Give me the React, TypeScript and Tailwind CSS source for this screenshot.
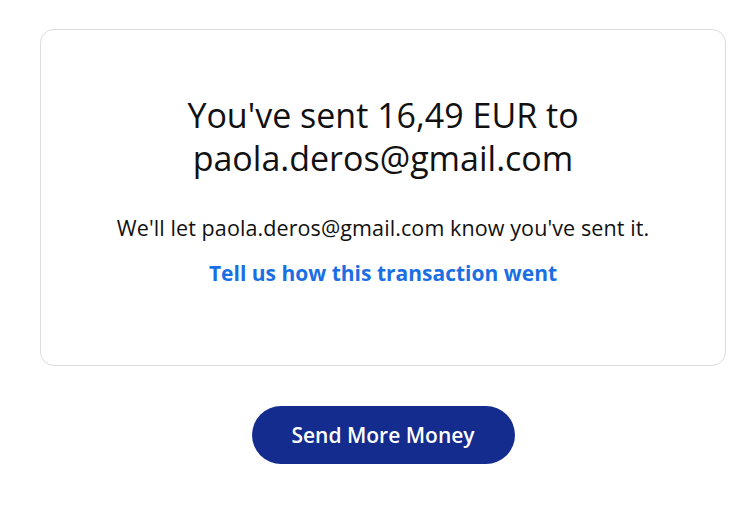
import React from 'react';

const App = () => {
  return (
    <div className="min-h-[511px] w-full bg-white pl-[40px] pr-[30px] pt-[29px] font-['Open_Sans',sans-serif] text-[#111111]">
      <div className="flex h-[337px] flex-col items-center rounded-[14px] border border-[#dcdcdc] px-6 pt-[64px] text-center">
        <h1 className="text-[34px] leading-[43px] font-normal">
          You've sent 16,49 EUR to
          <br />
          paola.deros@gmail.com
        </h1>
        <p className="mt-[34px] text-[21.5px] leading-[28px] tracking-[0.1px]">
          We'll let paola.deros@gmail.com know you've sent it.
        </p>
        <a href="#" className="mt-[17px] text-[21px] leading-[28px] font-bold text-[#1b6fe3]">
          Tell us how this transaction went
        </a>
      </div>
      <div className="mt-[40px] flex justify-center">
        <button className="h-[58px] w-[263px] rounded-full bg-[#142c8e] pt-[1px] text-[21px] font-semibold text-white">
          Send More Money
        </button>
      </div>
    </div>
  );
};

export default App;
